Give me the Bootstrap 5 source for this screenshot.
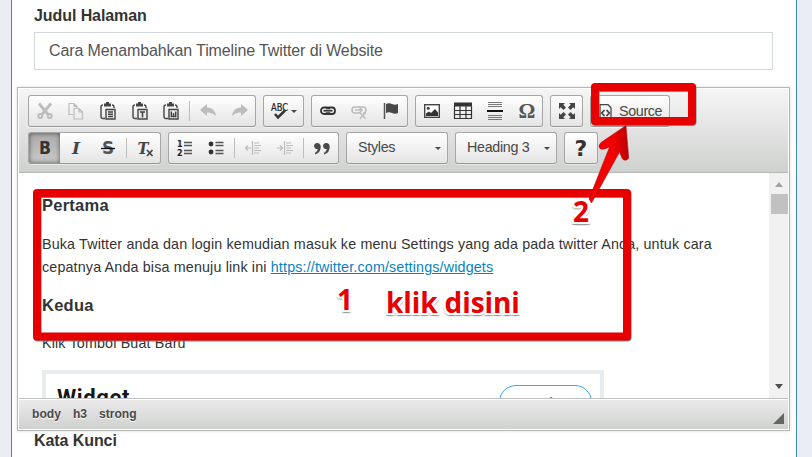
<!DOCTYPE html>
<html lang="id">
<head>
<meta charset="utf-8">
<meta name="viewport" content="width=device-width, initial-scale=1">
<title>Edit Halaman</title>
<link rel="stylesheet" href="https://cdn.jsdelivr.net/npm/bootstrap@5.3.0/dist/css/bootstrap.min.css">
<style>
html,body{height:457px;overflow:hidden}
body{background:#eaedf3;font-family:"Liberation Sans",Arial,sans-serif;color:#333}
.panel-box{width:786px;height:457px;margin-left:11px;border:solid #3c8dbc;border-width:0 1px;padding:6px 6px 0 5px}
.field-label{font-size:16px;font-weight:700;line-height:20px;margin-left:17px;display:block;letter-spacing:-.08px}
.title-input{width:739px;height:38px;margin:6px 0 17px 17px;border:1px solid #d2d6de;border-radius:0;padding:0 14px;font-size:16px;color:#555;line-height:36px;letter-spacing:-.12px}
.editor{width:773px;height:344px;border:1px solid #b6b6b6;padding:1px;box-shadow:0 0 3px rgba(0,0,0,.15);background:#fff}
.tools{height:84px;border-bottom:1px solid #b6b6b6;background:linear-gradient(#f5f5f5,#cfd1cf);padding:6px 0 0 9px}
.tool-row{height:32px;margin-bottom:5px;gap:7px}
.tool-group{height:32px;border:1px solid #a6a6a6;border-bottom-color:#979797;border-radius:3px;background:linear-gradient(#fff,#e4e4e4);box-shadow:0 1px 0 rgba(255,255,255,.5)}
.tool{width:31.6px;height:30px;border:0;background:none;padding:0;display:flex;align-items:center;justify-content:center;color:#444;flex:none}
.tool svg{display:block;overflow:visible}
.tool.faded{color:#bcbcbc}
.tool.pressed{background:linear-gradient(#aaa,#cacaca);box-shadow:0 0 5px rgba(0,0,0,.55) inset;width:31px;margin-right:.6px;border-radius:2px 0 0 2px}
.divider{width:1px;height:20px;margin:0 2.2px;background:#bdbdbd;flex:none}
.combo{width:102px;padding:0 6px 0 11px;font-size:14.3px;color:#474747;letter-spacing:-.3px}
.caret{width:0;height:0;border:3.5px solid transparent;border-top-color:#474747;border-bottom:0}
.source-btn{width:80px;font-size:14.3px;color:#484848;padding:2px 0 0 7px;gap:6px;letter-spacing:-.35px}
.edit-area{height:225px;overflow:hidden}
.doc{width:750px;padding:21px 0 0 23px;font-size:14.3px;line-height:23px;color:#333;letter-spacing:.155px}
.doc h3{font-size:16.5px;font-weight:700;line-height:23px;margin:0 0 16px;letter-spacing:.25px}
.doc h3:nth-of-type(2){margin-bottom:15px}
.doc p{margin:0 0 15px;white-space:nowrap}
.doc a{color:#0782c1}
.widget{width:562px;height:100px;border:4px solid #e6ecf0;padding:11px 8px 0 11px}
.widget strong{font:700 22px/25px Roboto,sans-serif;color:#14171a;letter-spacing:.6px}
.widget-btn{width:93px;height:36px;flex:none;border:1.5px solid #3ba6ee;border-radius:17px;color:#2a8fd4;font-weight:700;font-size:14px;line-height:34px;text-align:center;padding-left:2px}
.scrollbar-col{width:19px;background:#f1f1f1;padding:9px 0 9px 1px}
.arr-up,.arr-down{width:0;height:0;border:4.5px solid transparent}
.arr-up{border-top:0;border-bottom:5px solid #a3a3a3}
.arr-down{border-bottom:0;border-top:5px solid #505050}
.thumb{width:17px;height:20px;background:#c1c1c1;margin-top:7px}
.path-bar{height:31px;border-top:1px solid #bfbfbf;background:linear-gradient(#ebebeb,#cfd1cf);box-shadow:0 1px 0 #fff inset;font-size:12.1px;font-weight:700;color:#484848;padding:0 4px 0 13px;gap:12px;text-shadow:0 1px 0 #fff;line-height:14px}
.resizer{border:solid transparent;border-width:11px 0 0 11px;border-top:0;border-bottom:11px solid #666;align-self:flex-end;margin-bottom:5px}
.overlay{position:absolute;left:0;top:0;pointer-events:none}
.callout-text{position:absolute;font:700 28px/36px "Open Sans",sans-serif;color:#e60000;white-space:nowrap;text-shadow:-2px 0 #fff,2px 0 #fff,0 -2px #fff,0 2px #fff,1px 1px #fff,-1px 1px #fff,2px 2px #fff,-2px 2px #fff,0 3px 1px #999,2px 3px 1px #aaa,-2px 3px 1px #aaa}
.note-one{left:337px;top:281px}
.note-two{left:573px;top:193px}
.note-click{left:386px;top:284px;letter-spacing:-.1px}
</style>
</head>
<body>
<main class="panel-box bg-white">
  <label class="field-label" for="judul">Judul Halaman</label>
  <input id="judul" class="title-input d-block" value="Cara Menambahkan Timeline Twitter di Website">

  <section class="editor">
    <div class="tools">
      <div class="tool-row d-flex">
        <div class="tool-group d-flex align-items-center" style="width:228px">
          <button class="tool faded" aria-label="Cut"><svg width="16" height="16" fill="none" stroke="currentColor" stroke-width="2"><path d="M2 .5 11.500 12M14 .5 4.500 12" stroke-width="2.800"/><circle cx="3.300" cy="13" r="2"/><circle cx="12.700" cy="13" r="2"/></svg></button>
          <button class="tool faded" aria-label="Copy"><svg width="16" height="16" fill="none" stroke="currentColor" stroke-width="1.200"><path d="M5 11.500H1V.5h5l3 3V5M6 .5v3h3M6 5.500h5l3.500 3.500v7H6zM11 5.500V9h3.500"/></svg></button>
          <button class="tool" aria-label="Paste"><svg width="16" height="17" fill="none" stroke="currentColor" stroke-width="1.400"><path d="M5 15.500H3q-2 0-2-2V4q0-2 2-2M12 2q2 0 2 2v1"/><path d="M4 2h7" stroke-width="3"/><path d="M6 0h3" stroke-width="2"/><path d="M6 6.500h9v9.500H6z" fill="#eee"/><path d="M8 9h5M8 11.200h5M8 13.500h5"/></svg></button>
          <button class="tool" aria-label="Paste text"><svg width="16" height="17" fill="none" stroke="currentColor" stroke-width="1.400"><path d="M5 15.500H3q-2 0-2-2V4q0-2 2-2M12 2q2 0 2 2v1"/><path d="M4 2h7" stroke-width="3"/><path d="M6 0h3" stroke-width="2"/><path d="M6 6.500h9v9.500H6z" fill="#eee"/><path d="M8 9h5M10.500 9v5.500" stroke-width="1.600"/></svg></button>
          <button class="tool" aria-label="Paste from Word"><svg width="16" height="17" fill="none" stroke="currentColor" stroke-width="1.400"><path d="M5 15.500H3q-2 0-2-2V4q0-2 2-2M12 2q2 0 2 2v1"/><path d="M4 2h7" stroke-width="3"/><path d="M6 0h3" stroke-width="2"/><path d="M6 6.500h9v9.500H6z" fill="#eee"/><path d="M8.300 8.500v5h4.400v-5M10.500 10v3.500" stroke-width="1.500"/></svg></button>
          <span class="divider"></span>
          <button class="tool faded" aria-label="Undo"><svg width="16" height="14" fill="currentColor"><path d="M0 6 7 0v3.500q8 0 9 9Q13 8.500 7 8.500V12z"/></svg></button>
          <button class="tool faded" aria-label="Redo"><svg width="16" height="14" fill="currentColor"><path d="M16 6 9 0v3.500q-8 0-9 9Q3 8.500 9 8.500V12z"/></svg></button>
        </div>
        <div class="tool-group d-flex align-items-center" style="width:41px">
          <button class="tool" aria-label="Spell check"><svg width="18" height="18"><text x="0" y="9" font-family="DejaVu Sans" font-size="10" textLength="17" lengthAdjust="spacingAndGlyphs" fill="#222" stroke="#222" stroke-width=".2">ABC</text><path d="m4 12 3 3.500L14 8.500" fill="none" stroke="#333" stroke-width="2.500"/></svg></button>
          <span class="caret" style="margin-left:-5px"></span>
        </div>
        <div class="tool-group d-flex align-items-center" style="width:97px">
          <button class="tool" aria-label="Link"><svg width="16" height="10" fill="none" stroke="#333" stroke-width="1.800"><rect x="1" y="1.500" width="8.500" height="6.500" rx="3"/><rect x="6.500" y="1.500" width="8.500" height="6.500" rx="3"/><path d="M3.500 4.750h9" stroke="#ddd" stroke-width="3"/><path d="M3.500 4.750h9" stroke-width="1.500"/></svg></button>
          <button class="tool faded" aria-label="Unlink"><svg width="16" height="10" fill="none" stroke="currentColor" stroke-width="1.500"><rect x="1" y="1" width="9" height="6" rx="3"/><path d="M8 1h4q3 0 3 3t-3 3M4 4h8M9 7l5.500 5.500M14.500 7 9 12.500"/></svg></button>
          <button class="tool" aria-label="Anchor"><svg width="16" height="16"><path d="M1.500 0v16" stroke="#555" stroke-width="1.500"/><path d="M3 1q3-1.500 6 0t6 0v9q-3 1.500-6 0t-6 0z" fill="#484848"/></svg></button>
        </div>
        <div class="tool-group d-flex align-items-center" style="width:128px">
          <button class="tool" aria-label="Image"><svg width="16" height="14"><rect x=".7" y=".7" width="14.600" height="12.600" fill="#fff" stroke="#444" stroke-width="1.400"/><circle cx="4.200" cy="4.200" r="1.500" fill="#444"/><path d="M2 12V9.500l3-2 2 1.500L11 5l3 3.500V12z" fill="#333"/></svg></button>
          <button class="tool" aria-label="Table"><svg width="18" height="16" fill="none" stroke="#333"><path d="M0 1.500h18" stroke-width="4"/><path d="M.5 3v12.500h17V3M0 7.500h18M0 11.500h18M6 3v12M12 3v12" stroke-width="1.200"/></svg></button>
          <button class="tool" aria-label="Horizontal line"><svg width="16" height="18"><path d="M1 .5h14M1 2.500h14M1 4.500h14M1 13.500h14M1 15.500h14M1 17.500h14" stroke="#777"/><path d="M0 9h16" stroke="#111" stroke-width="2"/></svg></button>
          <button class="tool" aria-label="Symbol"><svg width="18" height="18"><text x="9" y="16" text-anchor="middle" font-family="Liberation Serif" font-size="21" font-weight="700" fill="#555">Ω</text></svg></button>
        </div>
        <div class="tool-group d-flex align-items-center" style="width:33px">
          <button class="tool" aria-label="Maximize"><svg width="16" height="16" fill="#444"><path d="M0 0h6L4.300 1.700 7 4.500 4.500 7 1.700 4.300 0 6zM16 0v6l-1.700-1.700L11.500 7 9 4.500l2.700-2.800L10 0zM0 16v-6l1.700 1.700L4.500 9 7 11.500l-2.700 2.800L6 16zM16 16h-6l1.700-1.700L9 11.500 11.500 9l2.800 2.700L16 10z"/></svg></button>
        </div>
        <div class="tool-group source-btn d-flex align-items-center">
          <svg width="15" height="16" fill="none" stroke="#444" stroke-width="1.300"><path d="M2 15.300V.7h8l3 3v11.600z"/><path d="m6.500 6-2.800 3 2.800 3M8.500 6l2.800 3-2.800 3" stroke-width="1.700"/></svg><span>Source</span>
        </div>
      </div>
      <div class="tool-row d-flex">
        <div class="tool-group d-flex align-items-center" style="width:133px">
          <button class="tool pressed" aria-label="Bold"><svg width="16" height="16"><text x="8" y="14" text-anchor="middle" font-family="DejaVu Sans" font-size="17" font-weight="700" textLength="12" lengthAdjust="spacingAndGlyphs" fill="#333">B</text></svg></button>
          <button class="tool" aria-label="Italic"><svg width="16" height="16"><text x="8" y="14" text-anchor="middle" font-family="DejaVu Serif" font-size="17" font-style="italic" font-weight="700" fill="#444">I</text></svg></button>
          <button class="tool" aria-label="Strike"><svg width="16" height="16"><text x="8" y="14" text-anchor="middle" font-family="DejaVu Sans" font-size="17" font-weight="700" fill="#555">S</text><path d="M1 8.500h14" stroke="#111" stroke-width="1.300"/></svg></button>
          <span class="divider"></span>
          <button class="tool" aria-label="Remove format"><svg width="16" height="16"><text x="6" y="14" text-anchor="middle" font-family="DejaVu Serif" font-size="17" font-style="italic" font-weight="700" textLength="11" lengthAdjust="spacingAndGlyphs" fill="#444">T</text><path d="m10 10 5.500 6M15.500 10l-5.500 6" stroke="#444" stroke-width="1.700"/></svg></button>
        </div>
        <div class="tool-group d-flex align-items-center" style="width:171px">
          <button class="tool" aria-label="Numbered list"><svg width="16" height="16"><g font-family="DejaVu Sans" font-size="8" font-weight="700" fill="#222"><text x="0" y="7">1</text><text x="0" y="15.500">2</text></g><path d="M7 2.500h8M7 5.500h8M7 10.500h8M7 13.500h8" stroke="#555" stroke-width="1.400"/></svg></button>
          <button class="tool" aria-label="Bulleted list"><svg width="16" height="16"><circle cx="3" cy="4" r="2.400" fill="#333"/><circle cx="3" cy="12" r="2.400" fill="#333"/><path d="M7.500 2.500h8M7.500 5.500h8M7.500 10.500h8M7.500 13.500h8" stroke="#555" stroke-width="1.400"/></svg></button>
          <span class="divider"></span>
          <button class="tool faded" aria-label="Outdent"><svg width="16" height="16" fill="none" stroke="currentColor" stroke-width="1.200"><path d="M7.500 1v14M9 3h5M9 5.500h7M9 8h5M9 10.500h7M9 13h5M6 8H0M3 5.500.5 8 3 10.500"/></svg></button>
          <button class="tool faded" aria-label="Indent"><svg width="16" height="16" fill="none" stroke="currentColor" stroke-width="1.200"><path d="M7.500 1v14M9 3h5M9 5.500h7M9 8h5M9 10.500h7M9 13h5M0 8h6M3 5.500 5.500 8 3 10.500"/></svg></button>
          <span class="divider"></span>
          <button class="tool" aria-label="Quote"><svg width="16" height="13" fill="#484848"><path id="q" d="M3.200 1a3 3 0 1 0 .6 5.900Q3.500 9.500 1 11v1.500Q7 10.500 6.700 4.500 6.500 1 3.200 1z"/><use href="#q" x="9"/></svg></button>
        </div>
        <div class="tool-group combo d-flex align-items-center justify-content-between"><span>Styles</span><span class="caret"></span></div>
        <div class="tool-group combo d-flex align-items-center justify-content-between"><span>Heading 3</span><span class="caret"></span></div>
        <div class="tool-group d-flex align-items-center" style="width:34px">
          <button class="tool" aria-label="About"><svg width="16" height="18"><text x="8" y="16.500" text-anchor="middle" font-family="DejaVu Sans" font-size="22" font-weight="700" fill="#333">?</text></svg></button>
        </div>
      </div>
    </div>

    <div class="edit-area d-flex">
      <article class="doc">
        <h3>Pertama</h3>
        <p>Buka Twitter anda dan login kemudian masuk ke menu Settings yang ada pada twitter Anda, untuk cara<br>cepatnya Anda bisa menuju link ini <a href="#">https://twitter.com/settings/widgets</a></p>
        <h3>Kedua</h3>
        <p>Klik Tombol Buat Baru</p>
        <div class="widget d-flex justify-content-between"><strong>Widget</strong><span class="widget-btn">Buat baru</span></div>
      </article>
      <div class="scrollbar-col d-flex flex-column align-items-center flex-shrink-0 ms-auto">
        <span class="arr-up"></span><span class="thumb"></span><span class="arr-down mt-auto"></span>
      </div>
    </div>

    <div class="path-bar d-flex align-items-center">
      <span>body</span><span>h3</span><span>strong</span><i class="resizer ms-auto"></i>
    </div>
  </section>
  <label class="field-label">Kata Kunci</label>
</main>

<svg class="overlay" width="812" height="457" fill="none">
  <defs><linearGradient id="shaft" x1="0" x2="1"><stop offset="0" stop-color="#f00000"/><stop offset=".6" stop-color="#f40000"/><stop offset="1" stop-color="#b80000"/></linearGradient></defs>
  <g stroke="#777" stroke-width="8" stroke-linejoin="round" opacity=".9"><rect x="37.500" y="194" width="590" height="143.500"/><rect x="595.500" y="88" width="97" height="34"/></g>
  <g stroke="#e60000" stroke-width="8" stroke-linejoin="round"><rect x="37" y="193" width="590" height="143.500"/><rect x="595" y="87" width="97" height="34"/></g>
  <path d="M626 125.500 601 142.500Q597.500 146 600 148.500 602 150.500 609.500 147L589 199 591.500 203 619.500 152 622.500 159Q626 162 628.700 158z" fill="url(#shaft)" stroke="#b00000" stroke-width=".5"/>
</svg>
<span class="callout-text note-one">1</span>
<span class="callout-text note-two">2</span>
<span class="callout-text note-click">klik disini</span>
<script src="https://cdn.jsdelivr.net/npm/bootstrap@5.3.0/dist/js/bootstrap.bundle.min.js"></script>
</body>
</html>
